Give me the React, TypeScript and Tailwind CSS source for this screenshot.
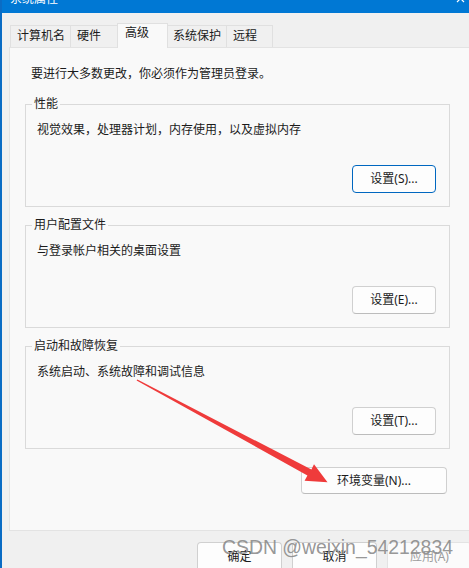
import React from 'react';

type Tab = { label: string; w: string; pl: string; selected?: boolean; noLeft?: boolean; last?: boolean };

const tabs: Tab[] = [
  { label: '计算机名', w: 'w-[60px]', pl: 'pl-[6px]' },
  { label: '硬件', w: 'w-[47px]', pl: 'pl-[6px]' },
  { label: '高级', w: 'w-[51px]', pl: 'pl-[7px]', selected: true },
  { label: '系统保护', w: 'w-[58px]', pl: 'pl-[5px]', noLeft: true },
  { label: '远程', w: 'w-[47px]', pl: 'pl-[6px]', last: true },
];

function DialogButton({
  children,
  className = '',
  primary = false,
  disabled = false,
}: {
  children: React.ReactNode;
  className?: string;
  primary?: boolean;
  disabled?: boolean;
}) {
  const border = primary
    ? 'border-[#0067c0]'
    : disabled
      ? 'border-[#e3e3e3]'
      : 'border-[#d0d0d0] border-b-[#bcbcbc]';
  return (
    <button
      className={`flex items-center justify-center rounded-[4px] border ${border} ${
        disabled ? 'bg-[#fbfbfb] text-[#9d9d9d]' : 'bg-[#fdfdfd] text-[#1b1b1b]'
      } text-[12px] leading-[16px] ${className}`}
    >
      {children}
    </button>
  );
}

function Group({ title, text, action }: { title: string; text: string; action: string }) {
  return (
    <fieldset className="w-[425px] border border-[#dadada] px-0">
      <legend className="ml-[6px] px-[2px] leading-[16px]">{title}</legend>
      <div className="pl-[11px] pr-[13px] pb-[13px]">
        <p className="mt-[10px] leading-[16px]">{text}</p>
        <div className="mt-[27px] flex justify-end">
          <DialogButton className="w-[84px] h-[28px]" primary={action === '设置(S)...'}>
            {action}
          </DialogButton>
        </div>
      </div>
    </fieldset>
  );
}

export default function App() {
  return (
    <div className="relative h-[568px] w-[469px] overflow-hidden border-l-2 border-[#0a6cc4] bg-[#f0f0f0] font-['Noto_Sans','Noto_Sans_CJK_SC',sans-serif] text-[12px] leading-[16px] text-[#1b1b1b]">
      {/* Title bar (cut off at top) */}
      <div className="flex h-[13px] justify-between overflow-hidden bg-[#0078d4]">
        <span className="ml-[8px] -mt-[9px] text-[12px] leading-[16px] text-white">系统属性</span>
        <svg className="mr-[1px] -mt-[1px]" width="12" height="6" viewBox="0 0 12 6">
          <path d="M1 -4 L8 3 M8 -4 L1 3" stroke="#ffffff" strokeWidth="1.2" fill="none" />
        </svg>
      </div>

      <div className="pl-[7px] pt-[10px]">
        {/* Tabs */}
        <div className="ml-[1px] flex h-[24px] items-end">
          {tabs.map((t) => (
            <div
              key={t.label}
              className={`${t.w} ${t.pl} border-t border-[#e0e0e0] ${t.noLeft ? '' : 'border-l'} ${
                t.selected || t.last ? 'border-r' : ''
              } ${
                t.selected
                  ? 'relative z-10 -mb-px h-[25px] bg-[#f9f9f9] pt-[1px]'
                  : 'h-[22px] bg-[#f0f0f0] pt-[2px]'
              } whitespace-nowrap leading-[16px]`}
            >
              {t.label}
            </div>
          ))}
        </div>

        {/* Tab panel */}
        <div className="border-t border-l border-b border-[#e3e3e3] bg-[#f9f9f9] pt-[18px] pb-[36px]">
          <p className="pl-[21px] leading-[16px]">要进行大多数更改，你必须作为管理员登录。</p>
          <div className="ml-[15px] mt-[14px] flex flex-col gap-[10px]">
            <Group title="性能" text="视觉效果，处理器计划，内存使用，以及虚拟内存" action="设置(S)..." />
            <Group title="用户配置文件" text="与登录帐户相关的桌面设置" action="设置(E)..." />
            <Group title="启动和故障恢复" text="系统启动、系统故障和调试信息" action="设置(T)..." />
          </div>
          <DialogButton className="ml-[291px] mt-[18px] w-[146px] h-[27px]">环境变量(N)...</DialogButton>
        </div>

        {/* Bottom buttons */}
        <div className="mt-[11px] flex gap-[10px] pl-[188px]">
          <DialogButton className="w-[85px] h-[30px] shrink-0">确定</DialogButton>
          <DialogButton className="w-[85px] h-[30px] shrink-0">取消</DialogButton>
          <DialogButton className="w-[85px] h-[30px] shrink-0" disabled>
            应用(A)
          </DialogButton>
        </div>
      </div>

      {/* Watermark */}
      <div className="pointer-events-none absolute left-[220px] top-[538px] whitespace-nowrap font-['Liberation_Sans',Arial,sans-serif] text-[19.4px] leading-[19px] text-[#8a8a8a]/90">
        CSDN @weixin_54212834
      </div>

      {/* Red annotation arrow */}
      <svg className="pointer-events-none absolute left-[-2px] top-0" width="469" height="568" viewBox="0 0 469 568">
        <polygon
          points="136.6,380.6 137.4,379.4 311.4,469.6 314,464.2 327.5,482.3 304.6,480.8 307.4,475.4"
          fill="#ef3b3b"
        />
      </svg>
    </div>
  );
}
